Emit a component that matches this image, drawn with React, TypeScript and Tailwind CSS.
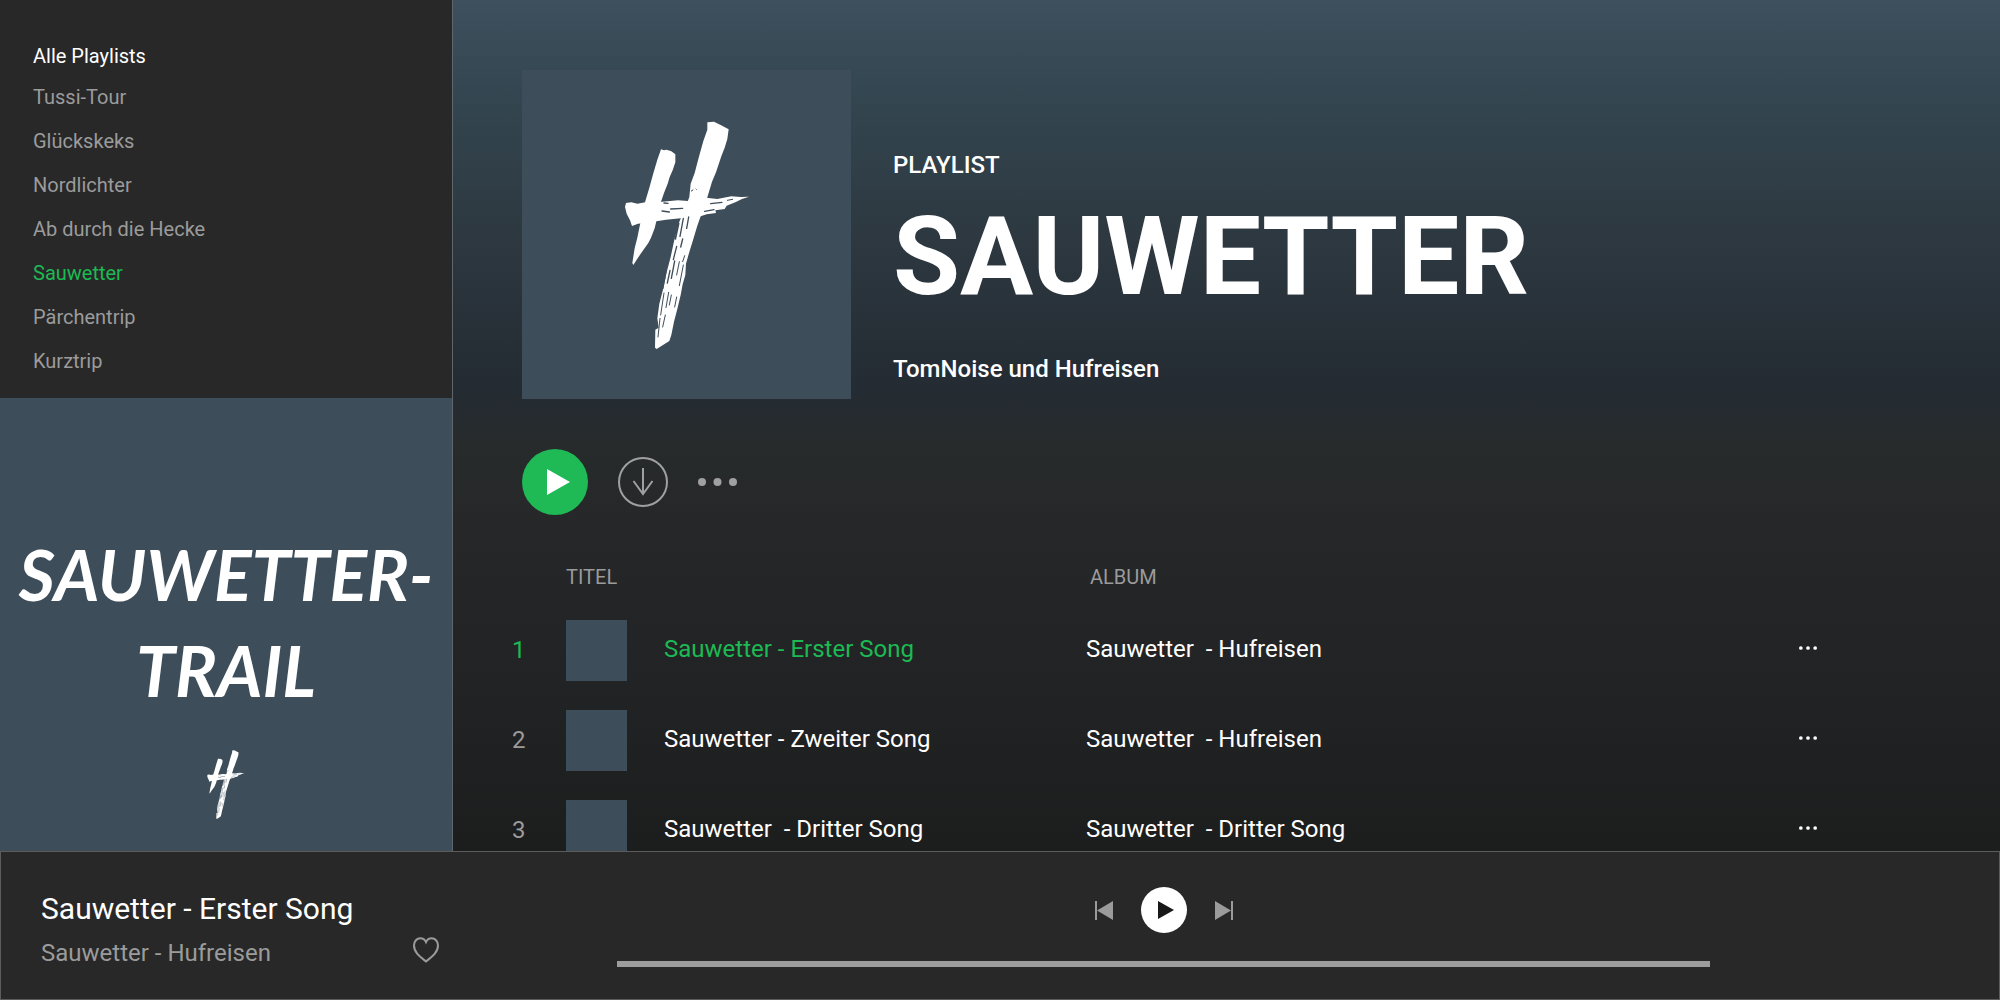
import React from "react";

const playlists = [
  "Tussi-Tour",
  "Glückskeks",
  "Nordlichter",
  "Ab durch die Hecke",
  "Sauwetter",
  "Pärchentrip",
  "Kurztrip",
];

const songs = [
  { title: "Sauwetter - Erster Song", album: "Sauwetter  - Hufreisen" },
  { title: "Sauwetter - Zweiter Song", album: "Sauwetter  - Hufreisen" },
  { title: "Sauwetter  - Dritter Song", album: "Sauwetter  - Dritter Song" },
];

function BrushMark({ className }: { className: string }) {
  return (
    <svg viewBox="73 58 372 684" className={className} role="img" aria-label="Hufreisen">
      <g fill="#fff">
        <path d="M181 143 L190 146 L198 144 L212 149 L224 158 L224 182 L216 206 L207 226 L201 246 L190 274 L181 300 L172 338 L162 380 L151 408 L143 424 L128 445 L112 468 L98 490 L95 484 L102 440 L110 408 L117 374 L133 302 L146 258 L158 215 L170 174 Z" />
        <path d="M320 62 L340 60 L360 70 L384 83 L380 112 L372 138 L362 164 L346 212 L334 240 L321 284 L312 312 L300 344 L290 372 L278 412 L264 458 L256 486 L254 520 L246 548 L240 580 L230 622 L220 660 L212 700 L206 718 L168 742 L163 738 L164 684 L174 678 L170 650 L176 606 L188 560 L198 512 L210 466 L222 410 L236 360 L254 318 L266 286 L270 246 L282 214 L294 168 L308 118 L320 84 Z" />
        <path d="M76 304 L92 302 L110 306 L134 302 L184 300 L232 296 L262 298 L316 288 L350 292 L392 284 L420 286 L445 285 L424 292 L404 302 L378 312 L372 322 L344 326 L346 334 L318 338 L286 348 L240 350 L196 354 L148 362 L112 366 L94 373 L88 356 L78 336 L73 316 Z" />
      </g>
      <g fill="none" stroke="#3d4d5a" strokeLinecap="round">
        <path strokeWidth="4" d="M184 328 L206 331 M210 322 L246 320 M190 304 L202 305 M330 306 L364 302 M312 329 L340 324" />
        <path strokeWidth="3" d="M286 262 L287 263 M272 268 L277 265 M380 296 L396 293" />
        <path strokeWidth="5" d="M234 366 L224 412 M196 506 L186 560" />
        <path strokeWidth="4" d="M248 350 L238 404 M264 346 L258 380 M228 434 L218 474 M246 412 L240 436 M208 506 L200 544 M222 478 L212 530" />
        <path strokeWidth="3" d="M190 574 L180 640 M204 572 L196 618 M236 480 L228 520 M178 650 L172 706 M248 490 L236 552 M194 640 L186 676 M228 586 L222 616 M212 580 L206 610 M252 462 L246 480" />
      </g>
    </svg>
  );
}

function Dots({ className }: { className: string }) {
  return (
    <svg viewBox="0 0 39 8" className={className} fill="currentColor" aria-hidden="true">
      <circle cx="4" cy="4" r="4" />
      <circle cx="19.500" cy="4" r="4" />
      <circle cx="35" cy="4" r="4" />
    </svg>
  );
}

function Sidebar() {
  return (
    <aside className="flex w-[453px] shrink-0 flex-col border-r border-[#5f676d] bg-[#282828]">
      <nav className="px-[33px] pt-11 pb-[15px] text-xl leading-6" aria-label="Playlists">
        <h2 className="mb-[7px] text-white">Alle Playlists</h2>
        <ul>
          {playlists.map((name) => (
            <li key={name} className="flex h-11 items-center">
              <a href="#" className={name === "Sauwetter" ? "text-[#1db954]" : "text-[#9b9b9b]"}>
                {name}
              </a>
            </li>
          ))}
        </ul>
      </nav>
      <div className="flex flex-1 flex-col items-center bg-[#3d4d5a] pt-32">
        <p className="text-center font-['Lato',sans-serif] text-[70px] leading-[96px] font-bold text-white italic">
          SAUWETTER-
          <br />
          TRAIL
        </p>
        <BrushMark className="mt-8 h-[69px] w-[38px]" />
      </div>
    </aside>
  );
}

function Hero() {
  return (
    <header className="flex gap-[42px] px-[69px] pt-[70px]">
      <div className="flex size-[329px] shrink-0 items-center justify-center bg-[#3d4d5a]">
        <BrushMark className="h-[228px] w-[124px]" />
      </div>
      <div className="pt-[79px] text-2xl font-medium text-white">
        <p>PLAYLIST</p>
        <h1 className="my-5 text-[109px] leading-[112px] font-bold">SAUWETTER</h1>
        <p className="pt-5">TomNoise und Hufreisen</p>
      </div>
    </header>
  );
}

function Actions() {
  return (
    <div className="mt-[50px] flex items-center gap-[30px] px-[69px] text-[#a0a0a0]">
      <button
        type="button"
        aria-label="Abspielen"
        className="flex size-[66px] items-center justify-center rounded-full bg-[#1fb955]"
      >
        <svg viewBox="0 0 66 66" className="size-full" fill="#fff" aria-hidden="true">
          <path d="M25 20 L48 33 L25 46 Z" />
        </svg>
      </button>
      <button type="button" aria-label="Herunterladen">
        <svg
          viewBox="0 0 50 50"
          className="size-[50px]"
          fill="none"
          stroke="currentColor"
          strokeWidth="2"
          aria-hidden="true"
        >
          <circle cx="25" cy="25" r="24" />
          <path d="M25 11 V37 M15.500 24 L25 37 L34.500 24" />
        </svg>
      </button>
      <button type="button" aria-label="Mehr">
        <Dots className="h-2 w-[39px]" />
      </button>
    </div>
  );
}

function SongTable() {
  return (
    <table className="mt-10 w-full table-fixed text-left text-2xl">
      <colgroup>
        <col className="w-[113px]" />
        <col className="w-[98px]" />
        <col className="w-[422px]" />
        <col />
        <col className="w-[201px]" />
      </colgroup>
      <thead>
        <tr className="h-[50px] align-top text-xl text-[#9b9b9b]">
          <th aria-label="Nummer" />
          <th colSpan={2} className="pt-2 font-normal">
            TITEL
          </th>
          <th className="pt-2 pl-1 font-normal">ALBUM</th>
          <th aria-label="Optionen" />
        </tr>
      </thead>
      <tbody>
        {songs.map((song, index) => (
          <tr key={song.title} className="h-[90px] text-white">
            <td className={index === 0 ? "pl-[59px] text-[#1db954]" : "pl-[59px] text-[#9b9b9b]"}>
              {index + 1}
            </td>
            <td>
              <div className="size-[61px] bg-[#3d4d5a]" />
            </td>
            <td className={index === 0 ? "pb-0.5 whitespace-pre text-[#1db954]" : "pb-0.5 whitespace-pre"}>
              {song.title}
            </td>
            <td className="pb-0.5 whitespace-pre">{song.album}</td>
            <td>
              <button type="button" aria-label="Optionen" className="mb-1 block">
                <Dots className="h-1 w-[18px]" />
              </button>
            </td>
          </tr>
        ))}
      </tbody>
    </table>
  );
}

function Player() {
  return (
    <footer className="flex h-[149px] shrink-0 border border-[#5c5c5c] bg-[#282828] text-[#9b9b9b]">
      <div className="flex w-[616px] shrink-0 gap-4 pt-[35px] pl-10">
        <div className="w-[356px]">
          <p className="text-[30px] leading-[44px] text-white">Sauwetter - Erster Song</p>
          <p className="mt-0.5 text-2xl leading-10">Sauwetter - Hufreisen</p>
        </div>
        <button type="button" aria-label="Gefällt mir" className="mt-[50px] size-[26px]">
          <svg viewBox="0 0 26 26" className="size-full" fill="none" stroke="currentColor" strokeWidth="2" aria-hidden="true">
            <path d="M13 24.500 C8 20.500 1 16 1 8.500 C1 4 4 1.300 7.300 1.300 C10 1.300 12 3 13 5.200 C14 3 16 1.300 18.700 1.300 C22 1.300 25 4 25 8.500 C25 16 18 20.500 13 24.500 Z" />
          </svg>
        </button>
      </div>
      <div className="flex flex-1 flex-col items-center pt-[35px]">
        <div className="flex items-center gap-7">
          <button type="button" aria-label="Zurück">
            <svg viewBox="0 0 18 19" className="h-[19px] w-[18px]" fill="currentColor" aria-hidden="true">
              <path d="M0 0 H2 V19 H0 Z M18 0 V19 L2 9.500 Z" />
            </svg>
          </button>
          <button type="button" aria-label="Wiedergabe" className="size-[46px] rounded-full bg-white">
            <svg viewBox="0 0 46 46" className="size-full" fill="#181818" aria-hidden="true">
              <path d="M17 14 L33 23 L17 32 Z" />
            </svg>
          </button>
          <button type="button" aria-label="Weiter">
            <svg viewBox="0 0 18 19" className="h-[19px] w-[18px]" fill="currentColor" aria-hidden="true">
              <path d="M16 0 H18 V19 H16 Z M0 0 V19 L16 9.500 Z" />
            </svg>
          </button>
        </div>
        <input
          type="range"
          aria-label="Position"
          defaultValue={0}
          className="mt-7 h-1.5 w-full appearance-none bg-[#9d9d9d] [&::-webkit-slider-thumb]:size-0 [&::-webkit-slider-thumb]:appearance-none"
        />
      </div>
      <div className="w-[289px] shrink-0" />
    </footer>
  );
}

export default function App() {
  return (
    <div className="flex h-screen flex-col overflow-hidden font-['Roboto',sans-serif]">
      <div className="flex min-h-0 flex-1">
        <Sidebar />
        <main className="min-w-0 flex-1 overflow-hidden bg-[linear-gradient(to_bottom,#3e505e_0%,#33454f_12%,#2d3840_28%,#242b32_46%,#272b2c_52%,#262728_62%,#222324_80%,#1c1d1d_100%)]">
          <Hero />
          <Actions />
          <SongTable />
        </main>
      </div>
      <Player />
    </div>
  );
}
